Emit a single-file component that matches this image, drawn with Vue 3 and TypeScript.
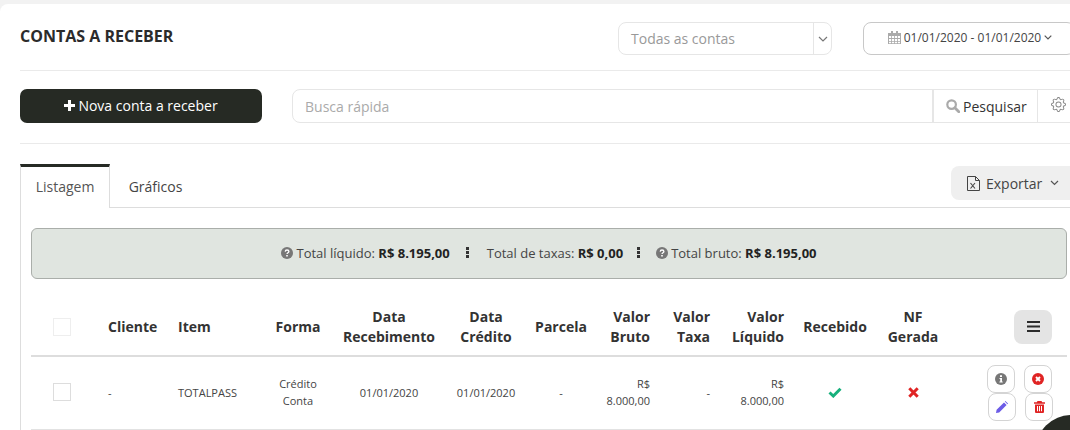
<script setup lang="ts">
interface Col { label: string[]; cls: string }
const cols: Col[] = [
  { label: ['Cliente'], cls: 'left pad-l' },
  { label: ['Item'], cls: 'left pad-l' },
  { label: ['Forma'], cls: 'center' },
  { label: ['Data', 'Recebimento'], cls: 'center' },
  { label: ['Data', 'Crédito'], cls: 'center' },
  { label: ['Parcela'], cls: 'center' },
  { label: ['Valor', 'Bruto'], cls: 'right pad-r' },
  { label: ['Valor', 'Taxa'], cls: 'right pad-r' },
  { label: ['Valor', 'Líquido'], cls: 'right pad-r' },
  { label: ['Recebido'], cls: 'center' },
  { label: ['NF', 'Gerada'], cls: 'center' }
]
const row: Col[] = [
  { label: ['-'], cls: 'left pad-l' },
  { label: ['TOTALPASS'], cls: 'left pad-l' },
  { label: ['Crédito', 'Conta'], cls: 'center' },
  { label: ['01/01/2020'], cls: 'center' },
  { label: ['01/01/2020'], cls: 'center' },
  { label: ['-'], cls: 'center' },
  { label: ['R$', '8.000,00'], cls: 'right pad-r' },
  { label: ['-'], cls: 'right pad-r' },
  { label: ['R$', '8.000,00'], cls: 'right pad-r' }
]
</script>

<template>
  <div class="page">
    <div class="card">
      <header class="head">
        <h1 class="title">CONTAS A RECEBER</h1>
        <div class="select">
          <span class="select-text">Todas as contas</span>
          <span class="select-arrow">
            <svg width="10" height="6" viewBox="0 0 10 6"><path d="M1 1l4 4 4-4" fill="none" stroke="#777" stroke-width="1.2"/></svg>
          </span>
        </div>
        <div class="date">
          <svg class="cal" width="13" height="13" viewBox="0 0 13 13"><path d="M0 2h13v11H0z" fill="#aaa"/><path d="M1 5h2.2v2H1zM4 5h2.2v2H4zM7 5h2.2v2H7zM10 5h2v2h-2zM1 8h2.2v2H1zM4 8h2.2v2H4zM7 8h2.2v2H7zM10 8h2v2h-2zM1 10.7h2.2v1.5H1zM4 10.7h2.2v1.5H4zM7 10.7h2.2v1.5H7zM10 10.7h2v1.5h-2z" fill="#fff"/><path d="M3 0h2v3H3zM8 0h2v3H8z" fill="#aaa"/></svg>
          <span>01/01/2020 - 01/01/2020</span>
          <svg width="8" height="5" viewBox="0 0 8 5"><path d="M.7.7L4 4 7.3.7" fill="none" stroke="#555" stroke-width="1.2"/></svg>
        </div>
      </header>

      <div class="actions">
        <button class="new">
          <svg width="11" height="11" viewBox="0 0 11 11"><path d="M4 0h3v4h4v3H7v4H4V7H0V4h4z" fill="#fff"/></svg>
          <span>Nova conta a receber</span>
        </button>
        <div class="search">
          <span class="search-ph">Busca rápida</span>
          <span class="search-btn">
            <svg width="14" height="14" viewBox="0 0 14 14"><circle cx="5.6" cy="5.6" r="4.3" fill="none" stroke="#aaa" stroke-width="2.2"/><path d="M8.8 8.800l4 4" stroke="#aaa" stroke-width="2.800" stroke-linecap="round"/></svg>
            <span>Pesquisar</span>
          </span>
          <span class="search-cog">
            <svg width="15" height="15" viewBox="0 0 16 16" fill="#888"><path d="M8 4.754a3.246 3.246 0 1 0 0 6.492 3.246 3.246 0 0 0 0-6.492zM5.754 8a2.246 2.246 0 1 1 4.492 0 2.246 2.246 0 0 1-4.492 0z"/><path d="M9.796 1.343c-.527-1.79-3.065-1.79-3.592 0l-.094.319a.873.873 0 0 1-1.255.52l-.292-.16c-1.64-.892-3.433.902-2.54 2.541l.159.292a.873.873 0 0 1-.52 1.255l-.319.094c-1.79.527-1.79 3.065 0 3.592l.319.094a.873.873 0 0 1 .52 1.255l-.16.292c-.892 1.64.901 3.434 2.541 2.54l.292-.159a.873.873 0 0 1 1.255.52l.094.319c.527 1.79 3.065 1.79 3.592 0l.094-.319a.873.873 0 0 1 1.255-.52l.292.16c1.64.893 3.434-.902 2.54-2.541l-.159-.292a.873.873 0 0 1 .52-1.255l.319-.094c1.79-.527 1.79-3.065 0-3.592l-.319-.094a.873.873 0 0 1-.52-1.255l.16-.292c.893-1.64-.902-3.433-2.541-2.54l-.292.159a.873.873 0 0 1-1.255-.52l-.094-.319zm-2.633.283c.246-.835 1.428-.835 1.674 0l.094.319a1.873 1.873 0 0 0 2.693 1.115l.291-.16c.764-.415 1.6.42 1.184 1.185l-.159.292a1.873 1.873 0 0 0 1.116 2.692l.318.094c.835.246.835 1.428 0 1.674l-.319.094a1.873 1.873 0 0 0-1.115 2.693l.16.291c.415.764-.42 1.6-1.185 1.184l-.291-.159a1.873 1.873 0 0 0-2.693 1.116l-.094.318c-.246.835-1.428.835-1.674 0l-.094-.319a1.873 1.873 0 0 0-2.692-1.115l-.292.16c-.764.415-1.6-.42-1.184-1.185l.159-.291A1.873 1.873 0 0 0 1.945 8.93l-.319-.094c-.835-.246-.835-1.428 0-1.674l.319-.094A1.873 1.873 0 0 0 3.06 4.377l-.16-.292c-.415-.764.42-1.6 1.185-1.184l.292.159a1.873 1.873 0 0 0 2.692-1.115l.094-.319z"/></svg>
          </span>
        </div>
      </div>

      <div class="tabs">
        <div class="tab active">Listagem</div>
        <div class="tab">Gráficos</div>
        <div class="export">
          <svg width="13" height="15" viewBox="0 0 13 15" fill="none" stroke="#444"><path d="M.5.5h8l4 4v10H.5z"/><path d="M8.500.5v4h4"/><path d="M3.500 7l4.500 5.500M8 7l-4.500 5.500" stroke-width="1.100"/></svg>
          <span>Exportar</span>
          <svg class="export-arrow" width="9" height="6" viewBox="0 0 9 6"><path d="M1 1l3.500 3.500L8 1" fill="none" stroke="#555" stroke-width="1.200"/></svg>
        </div>
      </div>

      <section class="content">
        <div class="summary">
          <svg class="q" width="12" height="12" viewBox="0 0 12 12"><circle cx="6" cy="6" r="6" fill="#777"/><path d="M4.200 4.600C4.300 3.500 5 3 6 3s1.900.6 1.900 1.500C7.900 5.700 6 5.700 6 7" fill="none" stroke="#fff" stroke-width="1.300"/><path d="M5.200 8h1.600v1.500H5.200z" fill="#fff"/></svg>
          <span class="sum-text">Total líquido: <b>R$ 8.195,00</b></span>
          <svg class="dots" width="3" height="11" viewBox="0 0 3 11"><path d="M0 0h3v3H0zM0 4h3v3H0zM0 8h3v3H0z" fill="#333"/></svg>
          <span class="sum-text mid">Total de taxas: <b>R$ 0,00</b></span>
          <svg class="dots dots2" width="3" height="11" viewBox="0 0 3 11"><path d="M0 0h3v3H0zM0 4h3v3H0zM0 8h3v3H0z" fill="#333"/></svg>
          <svg class="q" width="12" height="12" viewBox="0 0 12 12"><circle cx="6" cy="6" r="6" fill="#777"/><path d="M4.200 4.600C4.300 3.500 5 3 6 3s1.900.6 1.900 1.500C7.900 5.700 6 5.700 6 7" fill="none" stroke="#fff" stroke-width="1.300"/><path d="M5.200 8h1.600v1.500H5.200z" fill="#fff"/></svg>
          <span class="sum-text">Total bruto: <b>R$ 8.195,00</b></span>
        </div>

        <div class="grid thead">
          <div class="cell cb-cell"><span class="cb light"></span></div>
          <div v-for="c in cols" :key="c.label.join()" class="cell" :class="c.cls">
            <span v-for="l in c.label" :key="l">{{ l }}</span>
          </div>
          <div class="cell tools">
            <span class="bars">
              <svg width="13" height="11" viewBox="0 0 13 11"><path d="M0 0h13v2H0zM0 4.500h13v2H0zM0 9h13v2H0z" fill="#2b2b2b"/></svg>
            </span>
          </div>
        </div>

        <div class="grid tbody">
          <div class="cell cb-cell lift"><span class="cb"></span></div>
          <div v-for="(c, i) in row" :key="i" class="cell lift" :class="c.cls">
            <span v-for="l in c.label" :key="l">{{ l }}</span>
          </div>
          <div class="cell center lift">
            <svg width="14" height="11" viewBox="0 0 14 11"><path d="M1.500 5.500l3.800 3.500L12.500 1.800" fill="none" stroke="#17b07c" stroke-width="3"/></svg>
          </div>
          <div class="cell center lift">
            <svg width="11" height="11" viewBox="0 0 11 11"><path d="M1.300 1.300l8.400 8.400M9.700 1.300L1.300 9.700" fill="none" stroke="#e02424" stroke-width="3"/></svg>
          </div>
          <div class="cell row-actions">
            <div class="btn-row">
              <span class="ico">
                <svg width="12" height="12" viewBox="0 0 12 12"><circle cx="6" cy="6" r="6" fill="#777"/><path d="M5 2.300h2v1.700H5zM4.500 5h2.500v3.500h.7v1H4.400v-1h.8V6h-.7z" fill="#fff"/></svg>
              </span>
              <span class="ico">
                <svg width="12" height="12" viewBox="0 0 12 12"><circle cx="6" cy="6" r="6" fill="#e02424"/><path d="M4 4l4 4M8 4L4 8" stroke="#fff" stroke-width="1.900"/></svg>
              </span>
            </div>
            <div class="btn-row shift">
              <span class="ico">
                <svg width="12" height="12" viewBox="0 0 12 12"><path d="M0 12l.6-3.200L8 1.400l2.600 2.600L3.200 11.400zM8.800.6L9.400 0 12 2.600l-.6.6z" fill="#6c5ce7"/></svg>
              </span>
              <span class="ico">
                <svg width="11" height="12" viewBox="0 0 11 12"><path d="M3.500 0h4l.7 1.300H11v1.400H0V1.300h2.800zM1 3.500h9V11a1 1 0 0 1-1 1H2a1 1 0 0 1-1-1z" fill="#e02424"/><path d="M3 5h1v5.300H3zM5 5h1v5.300H5zM7 5h1v5.300H7z" fill="#fff"/></svg>
              </span>
            </div>
          </div>
        </div>
      </section>
    </div>
    <div class="chat"></div>
  </div>
</template>

<style>
html, body { margin: 0; background: #f2f2f2; overflow: hidden; }
</style>

<style scoped>
.page {
  position: relative;
  width: 1070px;
  height: 430px;
  overflow: hidden;
  padding-top: 4px;
  box-sizing: border-box;
  background: #f2f2f2;
  font-family: "Open Sans", sans-serif;
  color: #333;
}
.card {
  width: 1100px;
  height: 426px;
  box-sizing: border-box;
  padding: 0 25px 0 20px;
  background: #fff;
  border-top-left-radius: 8px;
}
.head {
  display: flex;
  align-items: flex-start;
  height: 67px;
  box-sizing: border-box;
  padding-top: 18px;
  border-bottom: 1px solid #eaeaea;
}
.title {
  flex: 1;
  margin: 0;
  font-size: 16px;
  line-height: 28px;
  font-weight: 700;
  color: #2b2b2b;
}
.select {
  display: flex;
  width: 214px;
  height: 33px;
  box-sizing: border-box;
  border: 1px solid #e6e6e6;
  border-radius: 8px;
  margin-right: 31px;
}
.select-text {
  flex: 1;
  padding-left: 12px;
  font-size: 14px;
  line-height: 32px;
  color: #999;
}
.select-arrow {
  display: flex;
  align-items: center;
  justify-content: center;
  width: 17px;
  border-left: 1px solid #e6e6e6;
}
.date {
  display: flex;
  align-items: center;
  justify-content: center;
  gap: 3px;
  width: 212px;
  height: 33px;
  box-sizing: border-box;
  padding: 0 0 2px 2px;
  border: 1px solid #c8c8c8;
  border-radius: 8px;
  font-size: 12px;
  color: #444;
}
.actions {
  display: flex;
  align-items: flex-start;
  height: 73px;
  box-sizing: border-box;
  padding-top: 18px;
  border-bottom: 1px solid #eaeaea;
}
.new {
  display: flex;
  align-items: center;
  justify-content: center;
  gap: 3px;
  width: 242px;
  height: 34px;
  padding: 0 0 2px;
  margin: 0 30px 0 0;
  border: 0;
  border-radius: 7px;
  background: #262a24;
  color: #fff;
  font: 14px "Open Sans", sans-serif;
}
.search {
  flex: 1;
  display: flex;
  height: 34px;
  box-sizing: border-box;
  border: 1px solid #e6e6e6;
  border-radius: 8px 0 0 8px;
}
.search-ph {
  flex: 1;
  padding-left: 12px;
  font-size: 14px;
  line-height: 33px;
  color: #aaa;
}
.search-btn {
  display: flex;
  align-items: center;
  gap: 3px;
  width: 106px;
  box-sizing: border-box;
  padding: 0 0 0 12px;
  border-left: 2px solid #e6e6e6;
  border-right: 1px solid #e6e6e6;
  font-size: 14px;
  color: #333;
}
.search-cog {
  display: flex;
  align-items: center;
  width: 36px;
  box-sizing: border-box;
  padding: 0 0 3px 13px;
}
.tabs {
  display: flex;
  align-items: flex-start;
  height: 64px;
  box-sizing: border-box;
  padding-top: 20px;
  border-bottom: 1px solid #ddd;
}
.tab {
  width: 91px;
  height: 44px;
  box-sizing: border-box;
  padding-top: 13px;
  text-align: center;
  font-size: 14px;
  line-height: 19px;
  color: #444;
}
.tab.active {
  width: 90px;
  padding-top: 10px;
  border-top: 3px solid #262a24;
  border-left: 1px solid #ddd;
  border-right: 1px solid #ddd;
  background: #fff;
  color: #555;
}
.export {
  display: flex;
  align-items: center;
  width: 124px;
  height: 34px;
  box-sizing: border-box;
  margin: 2px 0 0 auto;
  padding-left: 16px;
  background: #efefef;
  border-radius: 8px 0 0 8px;
  font-size: 14px;
  color: #444;
}
.export span { margin-left: 6px; }
.export-arrow { margin-left: 8px; }
.content {
  height: 223px;
  box-sizing: border-box;
  padding: 20px 8px 0 10px;
  border-left: 1px solid #ddd;
}
.summary {
  display: flex;
  align-items: center;
  justify-content: center;
  height: 51px;
  box-sizing: border-box;
  padding-bottom: 2px;
  background: #e0e5e0;
  border: 1px solid #aaaeaa;
  border-radius: 6px;
  font-size: 13px;
  color: #444;
}
.summary b { color: #222; }
.q { margin-right: 3px; }
.dots { margin: 0 18px 0 16px; }
.dots2 { margin: 0 16px 0 14px; }
.grid {
  display: grid;
  grid-template-columns: 65px 70px 96px 72px 110px 84px 66px 68px 60px 74px 78px 78px 115px;
}
.thead {
  height: 57px;
  padding-top: 1px;
  margin-top: 18px;
  border-bottom: 2px solid #ddd;
  font-size: 14px;
  line-height: 20px;
  font-weight: 700;
  color: #333;
}
.tbody {
  height: 72px;
  border-bottom: 1px solid #e2e2e2;
  font-size: 11px;
  line-height: 17px;
  color: #444;
}
.cell {
  display: flex;
  flex-direction: column;
  justify-content: center;
}
.lift { padding-bottom: 2px; }
.left { align-items: flex-start; }
.center { align-items: center; text-align: center; }
.right { align-items: flex-end; text-align: right; }
.pad-l { padding-left: 12px; }
.pad-r { padding-right: 12px; }
.cb-cell { padding-left: 22px; }
.cb {
  display: block;
  width: 18px;
  height: 18px;
  border: 1px solid #ddd;
  box-sizing: border-box;
}
.cb.light { border-color: #eee; }
.tools { align-items: flex-end; padding-right: 15px; }
.bars {
  display: flex;
  align-items: center;
  justify-content: center;
  width: 38px;
  height: 34px;
  border-radius: 8px;
  background: #e4e4e4;
}
.row-actions { padding-left: 35px; }
.btn-row { display: flex; gap: 9px; }
.btn-row.shift { padding-left: 1px; }
.ico {
  display: flex;
  align-items: center;
  justify-content: center;
  width: 28px;
  height: 28px;
  box-sizing: border-box;
  border: 1px solid #d4d4d4;
  border-radius: 8px;
  background: #fff;
}
.chat {
  position: absolute;
  left: 1036px;
  top: 415px;
  width: 70px;
  height: 70px;
  border-radius: 50%;
  background: #262a24;
}
</style>
